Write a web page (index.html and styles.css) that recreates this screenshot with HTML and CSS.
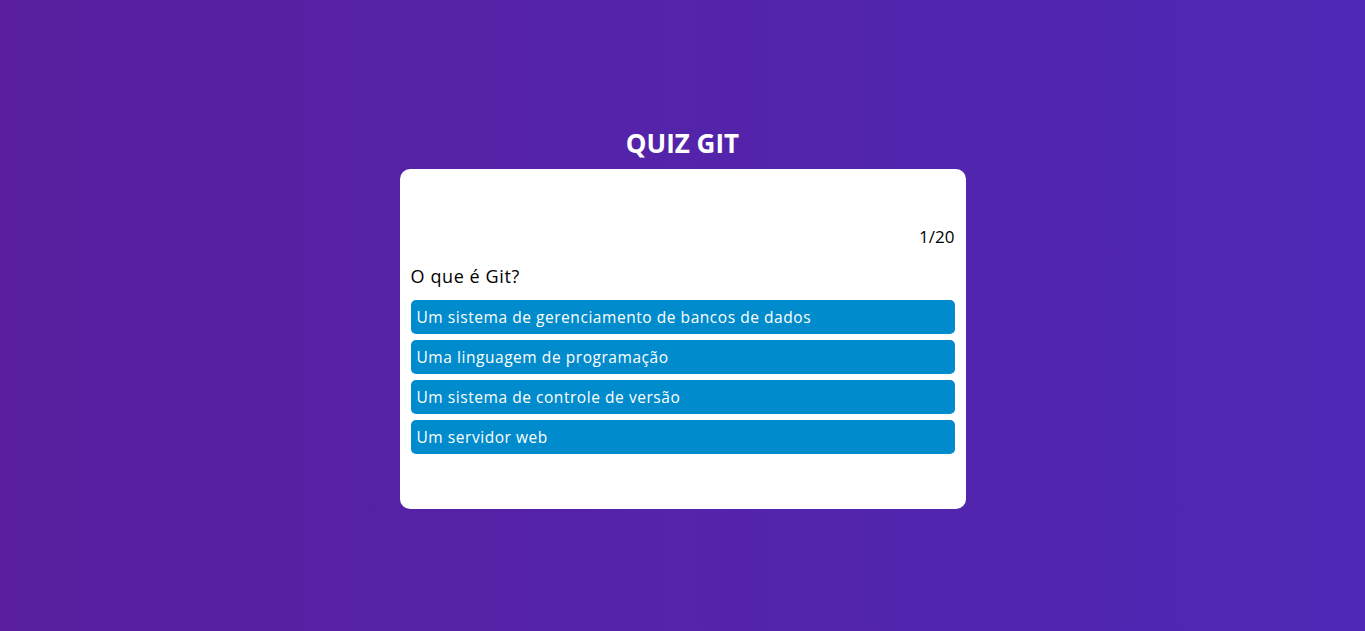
FILE: index.html
```html
<!DOCTYPE html>
<html lang="pt-BR">
<head>
<meta charset="utf-8">
<title>Quiz Git</title>
<link rel="stylesheet" href="styles.css">
</head>
<body>
<main class="app">
  <h1 class="title">QUIZ GIT</h1>
  <section class="card">
    <div class="counter">1/20</div>
    <p class="question">O que é Git?</p>
    <div class="answers">
      <button class="answer">Um sistema de gerenciamento de bancos de dados</button>
      <button class="answer">Uma linguagem de programação</button>
      <button class="answer">Um sistema de controle de versão</button>
      <button class="answer">Um servidor web</button>
    </div>
  </section>
</main>
</body>
</html>
```
FILE: styles.css
```css
* { box-sizing: border-box; }
html, body { margin: 0; height: 100%; }
body {
  background: linear-gradient(90deg, #591f9f 0%, #4e28b5 100%);
  font-family: "Open Sans", "Liberation Sans", sans-serif;
}
.app {
  display: flex;
  flex-direction: column;
  align-items: center;
  padding-top: 127px;
}
.title {
  margin: 0 0 10px;
  color: #fff;
  font-size: 26px;
  font-weight: 700;
  line-height: 32px;
}
.card {
  width: 566px;
  height: 340px;
  background: #fff;
  border-radius: 10px;
  padding: 56px 11px 0 11px;
}
.counter {
  text-align: right;
  font-size: 17px;
  line-height: 24px;
  color: #000;
}
.question {
  margin: 15px 0 12px;
  font-size: 18px;
  line-height: 24px;
  letter-spacing: 0.6px;
  color: #000;
}
.answers {
  display: flex;
  flex-direction: column;
  gap: 6px;
}
.answer {
  height: 34px;
  border: none;
  border-radius: 5px;
  background: #008bcc;
  color: #fff;
  text-align: left;
  padding: 0 6px;
  font-family: inherit;
  font-size: 15.5px;
  letter-spacing: 0.55px;
}
```
